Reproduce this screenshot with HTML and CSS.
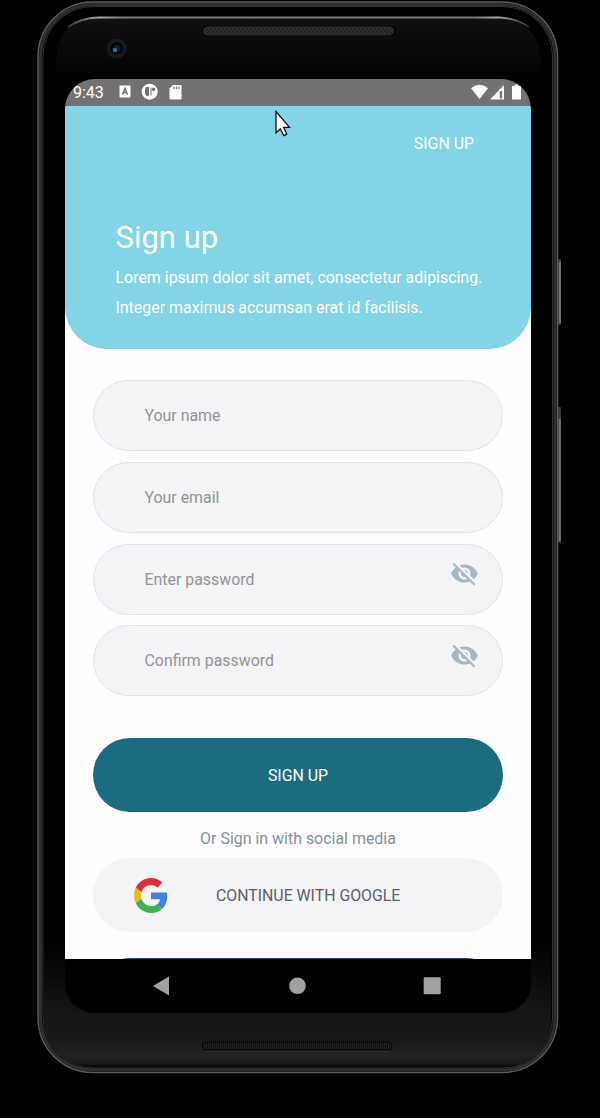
FILE: index.html
```html
<!DOCTYPE html>
<html lang="en">
<head>
<meta charset="utf-8">
<title>Sign up</title>
<link rel="stylesheet" href="styles.css">
</head>
<body>
<div class="stage">
  <svg class="device" width="600" height="1118" viewBox="0 0 600 1118" aria-hidden="true">
    <defs>
      <linearGradient id="chin" x1="0" y1="0" x2="0" y2="1">
        <stop offset="0" stop-color="#000"/><stop offset=".28" stop-color="#0a090b"/><stop offset=".55" stop-color="#161417"/>
        <stop offset=".78" stop-color="#19171a"/><stop offset=".91" stop-color="#232124"/><stop offset=".97" stop-color="#1b191c"/><stop offset="1" stop-color="#030303"/>
      </linearGradient>
      <linearGradient id="forehead" x1="0" y1="0" x2="0" y2="1">
        <stop offset="0" stop-color="#111012"/><stop offset=".45" stop-color="#0c0a0d"/><stop offset="1" stop-color="#020103"/>
      </linearGradient>
      <linearGradient id="shine" x1="0" y1="0" x2="1" y2="0">
        <stop offset="0" stop-color="#333"/><stop offset=".07" stop-color="#aaa"/><stop offset=".12" stop-color="#777"/>
        <stop offset=".88" stop-color="#777"/><stop offset=".93" stop-color="#aaa"/><stop offset="1" stop-color="#333"/>
      </linearGradient>
      <pattern id="mesh" width="4" height="4" patternUnits="userSpaceOnUse">
        <rect width="4" height="4" fill="#242324"/><circle cx="1" cy="1" r="1" fill="#343334"/><circle cx="3" cy="3" r="1" fill="#343334"/>
      </pattern>
      <pattern id="slots" width="2" height="4" patternUnits="userSpaceOnUse">
        <rect width="2" height="4" fill="#0f0e10"/><rect width="1" height="4" fill="#242225"/>
      </pattern>
    </defs>
    <rect x="557" y="259" width="4" height="66" rx="1" fill="#3b393b"/>
    <path d="M560 262v61" stroke="#8c898c" stroke-width="1.4"/>
    <rect x="557" y="407" width="4" height="136" rx="1" fill="#3b393b"/>
    <path d="M559.8 419v122" stroke="#777477" stroke-width="2"/>
    <rect x="38" y="2" width="519.500" height="1070.500" rx="55" fill="#000" stroke="#5d5b5d" stroke-width="1.500"/>
    <rect x="40.500" y="4.500" width="514.500" height="1065.500" rx="52.500" fill="#000" stroke="#302e31" stroke-width="3"/>
    <rect x="43" y="6.500" width="509.500" height="1061.500" rx="50" fill="none" stroke="#403e41" stroke-width=".8"/>
    <path d="M44 940H551V1018Q551 1067 500 1067H95Q44 1067 44 1018Z" fill="url(#chin)"/>
    <path d="M56 72V58Q60 18 97 18H500Q537 20 541 60V72Z" fill="url(#forehead)"/>
    <path d="M68 27Q81 18 98 17.500H499Q516 18 529 27" fill="none" stroke="url(#shine)" stroke-width="1.800"/>
    <rect x="202" y="26" width="194" height="10" rx="5" fill="#030303"/>
    <rect x="203.500" y="27" width="190" height="8" rx="4" fill="url(#mesh)" stroke="#373537" stroke-width=".7"/>
    <circle cx="116.700" cy="48.500" r="10" fill="#1a1a1b"/>
    <circle cx="116.700" cy="48.500" r="6.500" fill="#050608"/>
    <circle cx="117" cy="48" r="3.500" fill="#0d1c2c"/>
    <circle cx="115" cy="50" r="2.300" fill="#2f65a5"/>
    <rect x="202" y="1042" width="190" height="8" rx="4" fill="url(#slots)" stroke="#050505"/>
    <path d="M206 1051.500H389" stroke="#343235"/>
  </svg>

  <main class="screen">
    <div class="status">
      <span class="clock">9:43</span>
      <svg class="notices" width="66" height="18" viewBox="0 0 66 18" aria-hidden="true">
        <rect x="1.500" y="2.500" width="11" height="12" rx=".8" fill="#fff"/>
        <path d="M4.500 11.500 7 5.500l2.500 6M5.500 9.500h3" fill="none" stroke="#727172" stroke-width="1.500"/>
        <circle cx="31.700" cy="8.700" r="8" fill="#fff"/>
        <path d="M31 4h-1.500a2.500 2.500 0 0 0-2.500 2.500v4a2.500 2.500 0 0 0 4 2z" fill="#747274"/>
        <path d="M33 12.500V4.500" fill="none" stroke="#747274" stroke-width="1"/>
        <circle cx="35.600" cy="6.300" r="1.700" fill="#747274"/>
        <path d="M55 2h7.500a1 1 0 0 1 1 1v12.500a1 1 0 0 1-1 1H52.500a1 1 0 0 1-1-1V5.500z" fill="#fff"/>
        <path d="M56 3.500v2.500M58.500 3.500v2.500M61 3.500v2.500" stroke="#747274" stroke-width="1.200"/>
      </svg>
      <svg class="signals" width="54" height="18" viewBox="0 0 54 18" aria-hidden="true">
        <path d="M1 5.200Q9.500-1.500 18 5.200L9.500 16z" fill="#fff"/>
        <path d="M20 16.500 34 2v14.500z" fill="#fff"/>
        <path d="M29.800 8h2.400v7.500h-2.400z" fill="#777577"/>
        <path d="M42 3h2.500V1.500h4V3h2.500v13.500h-9z" fill="#fff"/>
      </svg>
    </div>

    <header class="hero">
      <a class="switch">SIGN UP</a>
      <h1 class="title">Sign up</h1>
      <p class="intro"><span class="line">Lorem ipsum dolor sit amet, consectetur adipiscing.</span><span class="line">Integer maximus accumsan erat id facilisis.</span></p>
    </header>

    <section class="form">
      <div class="field"><span class="hint">Your name</span></div>
      <div class="field"><span class="hint">Your email</span></div>
      <div class="field"><span class="hint">Enter password</span>
        <svg class="eye" width="29" height="29" viewBox="0 0 24 24"><path d="M12 7c2.760 0 5 2.240 5 5 0 .65-.13 1.260-.36 1.830l2.920 2.920c1.510-1.260 2.700-2.890 3.430-4.750-1.730-4.390-6-7.500-11-7.500-1.400 0-2.740.25-3.980.7l2.160 2.160C10.740 7.130 11.350 7 12 7zM2 4.270l2.280 2.280.46.46C3.080 8.300 1.780 10.020 1 12c1.730 4.390 6 7.500 11 7.500 1.550 0 3.030-.3 4.380-.84l.42.42L19.730 22 21 20.730 3.270 3 2 4.270zM7.530 9.800l1.550 1.550c-.05.21-.08.43-.08.65 0 1.660 1.340 3 3 3 .22 0 .44-.03.65-.08l1.550 1.550c-.67.33-1.410.53-2.200.53-2.760 0-5-2.240-5-5 0-.79.2-1.530.53-2.200zm4.310-.78 3.150 3.150.02-.16c0-1.660-1.340-3-3-3l-.17.01z"/></svg>
      </div>
      <div class="field"><span class="hint">Confirm password</span>
        <svg class="eye" width="29" height="29" viewBox="0 0 24 24"><path d="M12 7c2.760 0 5 2.240 5 5 0 .65-.13 1.260-.36 1.830l2.920 2.920c1.510-1.260 2.700-2.890 3.430-4.750-1.730-4.390-6-7.500-11-7.500-1.400 0-2.740.25-3.980.7l2.160 2.160C10.740 7.130 11.350 7 12 7zM2 4.270l2.280 2.280.46.46C3.080 8.300 1.780 10.020 1 12c1.730 4.390 6 7.500 11 7.500 1.550 0 3.030-.3 4.380-.84l.42.42L19.730 22 21 20.730 3.270 3 2 4.270zM7.530 9.800l1.550 1.550c-.05.21-.08.43-.08.65 0 1.660 1.340 3 3 3 .22 0 .44-.03.65-.08l1.550 1.550c-.67.33-1.410.53-2.200.53-2.760 0-5-2.240-5-5 0-.79.2-1.530.53-2.200zm4.310-.78 3.150 3.150.02-.16c0-1.660-1.340-3-3-3l-.17.01z"/></svg>
      </div>
      <div class="submit">SIGN UP</div>
      <p class="or">Or Sign in with social media</p>
      <div class="google">
        <svg class="logo" width="34" height="35" viewBox="0 0 48 48" preserveAspectRatio="none" aria-hidden="true">
          <path fill="#d93036" d="M24 9.500c3.540 0 6.710 1.220 9.210 3.600l6.850-6.850C35.900 2.380 30.470 0 24 0 14.620 0 6.510 5.380 2.560 13.220l7.980 6.190C12.430 13.720 17.740 9.500 24 9.500z"/>
          <path fill="#3f80e0" d="M46.980 24.550c0-1.570-.15-3.090-.38-4.550H24v9.020h12.940c-.58 2.960-2.260 5.480-4.780 7.180l7.730 6c4.510-4.180 7.090-10.360 7.090-17.650z"/>
          <path fill="#e9bb17" d="M10.530 28.590c-.48-1.450-.76-2.990-.76-4.590s.27-3.140.76-4.590l-7.980-6.190C.92 16.460 0 20.120 0 24c0 3.880.92 7.540 2.560 10.780l7.970-6.190z"/>
          <path fill="#3db24f" d="M24 48c6.480 0 11.930-2.130 15.890-5.810l-7.730-6c-2.150 1.450-4.920 2.300-8.160 2.300-6.260 0-11.570-4.220-13.470-9.910l-7.980 6.190C6.510 42.620 14.620 48 24 48z"/>
        </svg>
        <span class="google-label">CONTINUE WITH GOOGLE</span>
      </div>
      <div class="facebook"></div>
    </section>

    <nav class="nav">
      <svg width="466" height="55" viewBox="0 0 466 55" aria-hidden="true">
        <path d="M88 27 104 17.500V36.500z" fill="#a3a1a3"/>
        <circle cx="232.500" cy="26.800" r="8.300" fill="#a3a1a3"/>
        <rect x="358.700" y="18.300" width="17" height="17" rx="1" fill="#a3a1a3"/>
      </svg>
    </nav>
  </main>

  <svg class="cursor" width="18" height="28" viewBox="0 0 18 28" aria-hidden="true">
    <path d="M1 1.500V23l4.300-4.200 3.500 6.900 3-1.500-3.200-6.900h5.900z" fill="#fff" stroke="#111" stroke-width="1.300"/>
  </svg>
</div>
</body>
</html>
```

FILE: styles.css
```css
* { box-sizing: border-box; }
body { margin: 0; background: #000; font-family: Roboto, "Liberation Sans", sans-serif; }
h1, p { margin: 0; font-weight: 400; }
svg { display: block; flex: none; }
.stage { display: grid; position: relative; width: 600px; height: 1118px; overflow: hidden; }
.device { grid-area: 1 / 1; }
.screen { grid-area: 1 / 1; display: flex; flex-direction: column; width: 466px; height: 934px; margin: 79px 0 0 65px; border-radius: 30px; overflow: hidden; background: #000; }
.status { display: flex; align-items: center; flex: none; height: 27px; padding: 0 7px 1px 8px; background: #737173; color: #fff; }
.clock { width: 45px; font-size: 16px; line-height: 20px; padding-top: 2px; }
.signals { margin-left: auto; }
.hero { display: flex; flex-direction: column; flex: none; position: relative; z-index: 1; height: 243px; padding: 28px 0 0 50.500px; background: #82d4e6; border-radius: 0 0 42px 42px; color: #fff; }
.switch { align-self: flex-end; margin-right: 57px; font-size: 15.900px; line-height: 20px; }
.title { margin-top: 64px; font-size: 31px; line-height: 40px; }
.intro { display: flex; flex-direction: column; margin-top: 5px; font-size: 15.930px; line-height: 30px; }
.line { align-self: flex-start; white-space: nowrap; }
.form { display: flex; flex-direction: column; flex: none; height: 652px; margin-top: -42px; overflow: hidden; padding: 73px 28px 0; background: #fffdff; }
.field { display: flex; align-items: center; flex: none; height: 71px; margin-bottom: 10.800px; padding: 0 23px 0 50.500px; border: 1px solid #e3e3e7; border-radius: 36px; background: #f4f3f6; }
.hint { padding-top: 1px; color: #939495; font-size: 15.900px; line-height: 20px; }
.eye { margin: 0 0 11px auto; fill: #a5b8c2; }
.submit { display: flex; align-items: center; justify-content: center; flex: none; height: 74px; margin-top: 31px; border-radius: 37px; background: #1b6c7f; color: #fff; font-size: 15.900px; }
.or { margin-top: 16px; color: #82929b; font-size: 15.950px; line-height: 21px; text-align: center; }
.google { display: flex; align-items: center; flex: none; height: 74px; margin-top: 9px; padding-left: 41px; border-radius: 37px; background: #f4f3f6; }
.google-label { margin-left: 48px; padding-top: 1px; color: #58616b; font-size: 15.850px; }
.facebook { flex: none; height: 74px; margin-top: 25.600px; border-radius: 37px; background: #174a82; }
.nav { flex: none; height: 55px; background: #000; }
.cursor { position: absolute; left: 275px; top: 110px; z-index: 2; }
```
